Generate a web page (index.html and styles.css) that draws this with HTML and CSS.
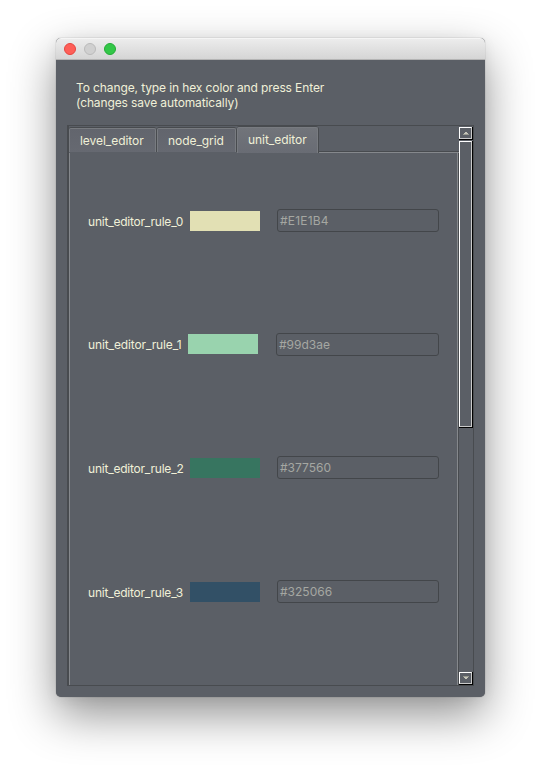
FILE: index.html
```html
<!DOCTYPE html>
<html lang="en">
<head>
<meta charset="utf-8">
<title>Color editor</title>
<link rel="stylesheet" href="styles.css">
</head>
<body>
<main class="window">
  <header class="titlebar"><i class="dot close"></i><i class="dot minimize"></i><i class="dot zoom"></i></header>
  <p class="hint"><span>To change, type in hex color and press Enter</span><br><span>(changes save automatically)</span></p>
  <section class="scroll-area">
    <div class="tab-widget">
      <nav class="tabs">
        <div class="tab level"><span>level_editor</span></div>
        <div class="tab node"><span>node_grid</span></div>
        <div class="tab active"><span>unit_editor</span></div>
        <div class="tab-rest"></div>
      </nav>
      <div class="pane">
        <div class="row"><span class="name">unit_editor_rule_0</span><i class="swatch cream"></i><div class="field wide">#E1E1B4</div></div>
        <div class="row one"><span class="name">unit_editor_rule_1</span><i class="swatch mint"></i><div class="field">#99d3ae</div></div>
        <div class="row two"><span class="name">unit_editor_rule_2</span><i class="swatch green"></i><div class="field">#377560</div></div>
        <div class="row"><span class="name">unit_editor_rule_3</span><i class="swatch blue"></i><div class="field">#325066</div></div>
      </div>
    </div>
    <div class="scrollbar">
      <div class="arrow"><svg width="6" height="3" viewBox="0 0 6 3" shape-rendering="crispEdges"><path d="M2 0h2v1h1v1H1V1h1z" fill="#c4c4b8"/><path d="M0 2h6v1H0z" fill="#96988f"/></svg></div>
      <div class="thumb"></div>
      <div class="arrow down"><svg width="6" height="3" viewBox="0 0 6 3" shape-rendering="crispEdges"><path d="M0 0h6v1H0z" fill="#96988f"/><path d="M1 1h4v1H4v1H2V2H1z" fill="#c4c4b8"/></svg></div>
    </div>
  </section>
</main>
</body>
</html>
```

FILE: styles.css
```css
* { box-sizing: border-box; }
body {
  margin: 0;
  height: 771px;
  padding: 38px 56px 0;
  overflow: hidden;
  background: #fff;
  font: 12px/15px Inter, "Liberation Sans", sans-serif;
  color: #f0f0d8;
}
.window {
  width: 429px;
  height: 659px;
  border-radius: 5px;
  overflow: hidden;
  background: #5b5f66;
  box-shadow: 0 0 1px rgba(0,0,0,.5), 0 18px 46px rgba(0,0,0,.43), 0 2px 14px rgba(0,0,0,.06);
}
.titlebar {
  display: flex;
  align-items: center;
  gap: 8px;
  height: 22px;
  padding-left: 8px;
  background: linear-gradient(#ececec, #d5d5d5);
  border-top: 1px solid #f5f5f5;
  border-bottom: 1px solid #b4b4b4;
}
.dot { width: 12px; height: 12px; border-radius: 50%; border: 1px solid; }
.close { background: #fe5f58; border-color: #e5453f; }
.minimize { background: #d0d0d0; border-color: #bababa; }
.zoom { background: #33c748; border-color: #23ab36; }
.hint {
  margin: 0;
  height: 65px;
  padding: 20px 0 0 20px;
  letter-spacing: -0.11px;
  white-space: nowrap;
}
.scroll-area {
  display: flex;
  width: 407px;
  height: 561px;
  margin-left: 11px;
  border: 1px solid #484b4f;
}
.tab-widget { width: 391px; height: 559px; border-left: 1px solid #484b4f; }
.tabs { display: flex; height: 27px; }
.tab {
  height: 24px;
  margin-top: 2px;
  border: 1px solid #787b80;
  border-bottom: 0;
  border-radius: 2px 2px 0 0;
  background: linear-gradient(#62656d, #666971);
  box-shadow: 0 -1px #484b4f, 1px 0 #484b4f;
  padding: 4px 0 0 10px;
  letter-spacing: -0.06px;
  white-space: nowrap;
}
.level { width: 87px; margin-right: 1px; }
.node { width: 79px; margin-right: 1px; }
.active {
  width: 81px;
  height: 26px;
  margin-top: 1px;
  background: linear-gradient(#71747a, #696c74);
}
.tab-rest {
  flex: 1;
  align-self: flex-end;
  height: 2px;
  margin-left: 1px;
  border-top: 1px solid #484b4f;
  border-bottom: 1px solid #85888c;
}
.pane {
  width: 390px;
  height: 532px;
  padding: 56px 0 0 18px;
  border-left: 1px solid #85888c;
  border-right: 1px solid #484b4f;
  box-shadow: inset -1px 0 #85888c;
}
.row { display: flex; height: 124px; }
.two { margin-top: -1px; }
.name { width: 102px; padding-top: 5px; letter-spacing: -0.22px; white-space: nowrap; }
.swatch { width: 70px; height: 20px; margin: 2px 17px 0 0; }
.cream { background: #e2e0b4; }
.mint { background: #99d3ae; }
.green { background: #377560; }
.blue { background: #325066; }
.field {
  width: 162px;
  height: 23px;
  padding: 3px 2px;
  border: 1px solid #43464a;
  border-radius: 3px;
  color: #a5a7a2;
}
.wide { letter-spacing: 0.2px; }
.one .name { width: 100px; padding-top: 4px; letter-spacing: -0.12px; }
.one .swatch { margin-top: 1px; margin-right: 18px; }
.one .field { width: 163px; }
.scrollbar { display: flex; flex-direction: column; width: 14px; padding-top: 1px; }
.arrow, .thumb {
  border: 1px solid #fff;
  border-right-color: #cacaca;
  border-bottom-color: #cacaca;
  width: 13px;
  box-shadow: 1px 0 #000, 0 1px #000, 1px 1px #000;
}
.arrow { display: flex; height: 12px; padding: 4px 0 0 3px; }
.thumb { height: 286px; margin-top: 2px; }
.down { margin-top: auto; margin-bottom: 1px; padding-top: 3px; }
```
